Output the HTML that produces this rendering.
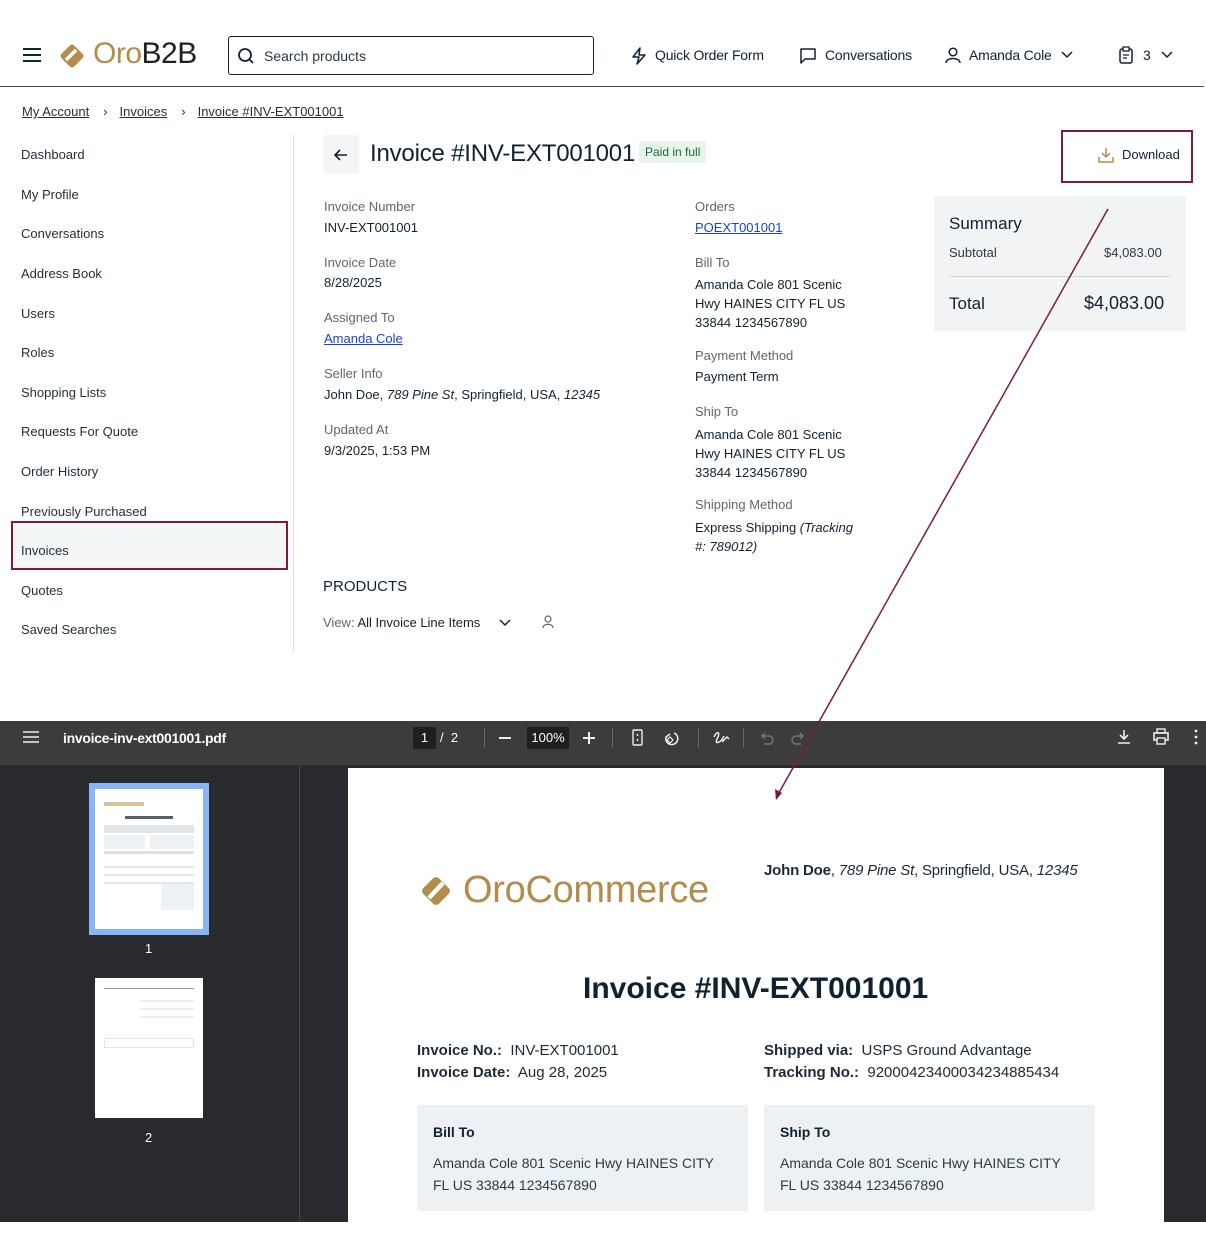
<!DOCTYPE html>
<html><head><meta charset="utf-8"><style>
*{box-sizing:border-box;margin:0;padding:0}
body{width:1206px;height:1247px;background:#fff;font-family:"Liberation Sans",sans-serif;color:#0f2230;position:relative;overflow:hidden;font-size:13px}
.a{position:absolute;white-space:nowrap}
.lbl{color:#5d6770;font-size:13px}
.val{font-size:13px;color:#0f2230}
a,.lnk{color:#1b3ee0;text-decoration:underline}
.nav{position:absolute;left:21px;font-size:13px;color:#1f2d38}
</style></head><body>
<!-- header -->
<svg class="a" style="left:22px;top:47px" width="20" height="16"><path d="M1 2h18M1 8h18M1 14h18" stroke="#0f2230" stroke-width="2"/></svg>
<svg class="a" style="left:56px;top:40px" width="32" height="32"><rect x="7" y="7" width="18" height="18" rx="3" transform="rotate(45 16 16)" fill="#b58b4c"/><path d="M10 20 L20 10" stroke="#fff" stroke-width="3.5"/></svg>
<div class="a" style="left:93px;top:37px;font-size:30px;color:#b58b4c;letter-spacing:-0.5px">Oro<span style="color:#1f2022">B2B</span></div>
<div class="a" style="left:228px;top:36px;width:366px;height:39px;border:1px solid #0f2230;border-radius:3px"></div>
<svg class="a" style="left:237px;top:47px" width="18" height="18"><circle cx="8" cy="8" r="6" fill="none" stroke="#0f2230" stroke-width="1.8"/><path d="M12.5 12.5 L16 16" stroke="#0f2230" stroke-width="1.8"/></svg>
<div class="a" style="left:264px;top:48px;font-size:14px;color:#2a3a46">Search products</div>
<svg class="a" style="left:630px;top:47px" width="18" height="18"><path d="M10 1 L3 10 H9 L7 17 L15 8 H9 Z" fill="none" stroke="#0f2230" stroke-width="1.5" stroke-linejoin="round"/></svg>
<div class="a" style="left:655px;top:47px;font-size:14px;letter-spacing:-0.2px">Quick Order Form</div>
<svg class="a" style="left:799px;top:47px" width="18" height="18"><path d="M2 2 H16 V12 H6 L2 16 Z" fill="none" stroke="#0f2230" stroke-width="1.5" stroke-linejoin="round"/></svg>
<div class="a" style="left:825px;top:47px;font-size:14px;letter-spacing:-0.2px">Conversations</div>
<svg class="a" style="left:944px;top:46px" width="18" height="18"><circle cx="9" cy="6" r="3.8" fill="none" stroke="#0f2230" stroke-width="1.5"/><path d="M2 17 C2 11 16 11 16 17" fill="none" stroke="#0f2230" stroke-width="1.5"/></svg>
<div class="a" style="left:969px;top:47px;font-size:14px;letter-spacing:-0.2px">Amanda Cole</div>
<svg class="a" style="left:1061px;top:51px" width="12" height="8"><path d="M1 1 L6 6 L11 1" fill="none" stroke="#0f2230" stroke-width="1.5"/></svg>
<svg class="a" style="left:1118px;top:46px" width="16" height="18"><rect x="2" y="3" width="12" height="14" rx="2" fill="none" stroke="#0f2230" stroke-width="1.5"/><rect x="5" y="1" width="6" height="4" fill="#fff" stroke="#0f2230" stroke-width="1.3"/><path d="M5 9h6M5 12h4" stroke="#0f2230" stroke-width="1.3"/></svg>
<div class="a" style="left:1143px;top:47px;font-size:14px">3</div>
<svg class="a" style="left:1161px;top:51px" width="12" height="8"><path d="M1 1 L6 6 L11 1" fill="none" stroke="#0f2230" stroke-width="1.5"/></svg>
<div class="a" style="left:0;top:86px;width:1204px;height:1px;background:#4a4f55"></div>
<!-- breadcrumb -->
<div class="a" style="left:22px;top:104px;font-size:13px;color:#1f2d38"><span style="text-decoration:underline">My Account</span><span style="margin:0 12px 0 14px">›</span><span style="text-decoration:underline">Invoices</span><span style="margin:0 12px 0 14px">›</span><span style="text-decoration:underline">Invoice #INV-EXT001001</span></div>
<!-- sidebar -->
<div class="nav" style="top:147px">Dashboard</div>
<div class="nav" style="top:187px">My Profile</div>
<div class="nav" style="top:226px">Conversations</div>
<div class="nav" style="top:266px">Address Book</div>
<div class="nav" style="top:306px">Users</div>
<div class="nav" style="top:345px">Roles</div>
<div class="nav" style="top:385px">Shopping Lists</div>
<div class="nav" style="top:424px">Requests For Quote</div>
<div class="nav" style="top:464px">Order History</div>
<div class="nav" style="top:504px">Previously Purchased</div>
<div class="a" style="left:11px;top:521px;width:277px;height:49px;border:2px solid #7b1c3f;background:#f3f5f7"></div>
<div class="nav" style="top:543px">Invoices</div>
<div class="nav" style="top:583px">Quotes</div>
<div class="nav" style="top:622px">Saved Searches</div>
<div class="a" style="left:293px;top:135px;width:1px;height:516px;background:#dfe2e5"></div>
<!-- title -->
<div class="a" style="left:323px;top:135px;width:36px;height:39px;background:#f3f5f7;border-radius:3px"></div>
<svg class="a" style="left:333px;top:148px" width="16" height="14"><path d="M14 7 H2 M7 2 L2 7 L7 12" fill="none" stroke="#0f2230" stroke-width="1.6"/></svg>
<div class="a" style="left:370px;top:140px;font-size:24px;color:#0f2230;letter-spacing:-0.2px">Invoice #INV-EXT001001</div>
<div class="a" style="left:639px;top:141px;padding:4px 6px;background:#e6f4ea;color:#1d6b30;font-size:12px;border-radius:3px">Paid in full</div>
<div class="a" style="left:1061px;top:130px;width:132px;height:53px;border:2px solid #7b1c3f"></div>
<svg class="a" style="left:1097px;top:146px" width="18" height="18"><path d="M9 2 V11 M5 7 L9 11 L13 7 M2 11 V16 H16 V11" fill="none" stroke="#b58b4c" stroke-width="1.5"/></svg>
<div class="a" style="left:1122px;top:147px;font-size:13px">Download</div>
<!-- details col1 -->
<div class="a lbl" style="left:324px;top:199px">Invoice Number</div><div class="a val" style="left:324px;top:220px">INV-EXT001001</div>
<div class="a lbl" style="left:324px;top:255px">Invoice Date</div><div class="a val" style="left:324px;top:275px">8/28/2025</div>
<div class="a lbl" style="left:324px;top:310px">Assigned To</div><div class="a lnk" style="left:324px;top:331px">Amanda Cole</div>
<div class="a lbl" style="left:324px;top:366px">Seller Info</div><div class="a val" style="left:324px;top:387px">John Doe, <i>789 Pine St</i>, Springfield, USA, <i>12345</i></div>
<div class="a lbl" style="left:324px;top:422px">Updated At</div><div class="a val" style="left:324px;top:443px">9/3/2025, 1:53 PM</div>
<!-- col2 -->
<div class="a lbl" style="left:695px;top:199px">Orders</div><div class="a lnk" style="left:695px;top:220px">POEXT001001</div>
<div class="a lbl" style="left:695px;top:255px">Bill To</div><div class="a val" style="left:695px;top:275px;line-height:19px">Amanda Cole 801 Scenic<br>Hwy HAINES CITY FL US<br>33844 1234567890</div>
<div class="a lbl" style="left:695px;top:348px">Payment Method</div><div class="a val" style="left:695px;top:369px">Payment Term</div>
<div class="a lbl" style="left:695px;top:404px">Ship To</div><div class="a val" style="left:695px;top:425px;line-height:19px">Amanda Cole 801 Scenic<br>Hwy HAINES CITY FL US<br>33844 1234567890</div>
<div class="a lbl" style="left:695px;top:497px">Shipping Method</div><div class="a val" style="left:695px;top:518px;line-height:19px">Express Shipping <i>(Tracking<br>#: 789012)</i></div>
<!-- summary -->
<div class="a" style="left:934px;top:196px;width:252px;height:135px;background:#f1f3f5"></div>
<div class="a" style="left:949px;top:214px;font-size:17px">Summary</div>
<div class="a" style="left:949px;top:245px;font-size:13px;color:#2a3a46">Subtotal</div>
<div class="a" style="left:1104px;top:245px;font-size:13px;color:#2a3a46">$4,083.00</div>
<div class="a" style="left:949px;top:276px;width:222px;height:1px;background:#cfd4d9"></div>
<div class="a" style="left:949px;top:294px;font-size:17px">Total</div>
<div class="a" style="left:1084px;top:293px;font-size:18px">$4,083.00</div>
<!-- products -->
<div class="a" style="left:323px;top:578px;font-size:15px">PRODUCTS</div>
<div class="a" style="left:323px;top:615px;font-size:13px;color:#5d6770">View: <span style="color:#0f2230">All Invoice Line Items</span></div>
<svg class="a" style="left:499px;top:619px" width="12" height="8"><path d="M1 1 L6 6 L11 1" fill="none" stroke="#0f2230" stroke-width="1.5"/></svg>
<svg class="a" style="left:542px;top:615px" width="12" height="14"><circle cx="6" cy="4" r="3" fill="none" stroke="#5d6770" stroke-width="1.2"/><path d="M1 13 C1 8 11 8 11 13" fill="none" stroke="#5d6770" stroke-width="1.2"/></svg>
<!-- PDF viewer -->
<div class="a" style="left:0;top:721px;width:1206px;height:501px;background:#282a2d"></div>
<div class="a" style="left:0;top:721px;width:1206px;height:44px;background:#3c3c3c"></div>
<div class="a" style="left:299px;top:765px;width:1px;height:457px;background:#4a4a4a"></div>
<svg class="a" style="left:23px;top:731px" width="16" height="12"><path d="M0 1h16M0 6h16M0 11h16" stroke="#eee" stroke-width="1.6"/></svg>
<div class="a" style="left:63px;top:730px;font-size:14px;color:#fff;font-weight:bold;letter-spacing:-0.3px">invoice-inv-ext001001.pdf</div>
<div class="a" style="left:413px;top:727px;width:23px;height:22px;background:#1f1f1f;color:#fff;font-size:13px;text-align:center;line-height:22px">1</div>
<div class="a" style="left:440px;top:730px;color:#fff;font-size:13px">/&nbsp; 2</div>
<div class="a" style="left:484px;top:728px;width:1px;height:20px;background:#666"></div>
<div class="a" style="left:499px;top:737px;width:12px;height:2px;background:#eee"></div>
<div class="a" style="left:527px;top:727px;width:42px;height:22px;background:#1f1f1f;color:#fff;font-size:13px;text-align:center;line-height:22px">100%</div>
<div class="a" style="left:583px;top:737px;width:12px;height:2px;background:#eee"></div><div class="a" style="left:588px;top:732px;width:2px;height:12px;background:#eee"></div>
<div class="a" style="left:612px;top:728px;width:1px;height:20px;background:#666"></div>
<svg class="a" style="left:630px;top:729px" width="80" height="18"><rect x="3" y="1" width="9" height="15" rx="1" fill="none" stroke="#eee" stroke-width="1.4"/><path d="M7.5 5v2M7.5 10v2" stroke="#eee" stroke-width="1.4"/><path d="M44 4 A6 6 0 1 1 36 8 L40 5" fill="none" stroke="#eee" stroke-width="1.5"/><path d="M40 8 l3 3 -3 3 -3 -3z" fill="none" stroke="#eee" stroke-width="1.2"/></svg>
<div class="a" style="left:698px;top:728px;width:1px;height:20px;background:#666"></div>
<svg class="a" style="left:712px;top:729px" width="18" height="18"><path d="M2 8 C5 1 9 3 5 10 C2 16 9 14 12 7 M10 13 L15 8 L17 10" fill="none" stroke="#eee" stroke-width="1.5"/></svg>
<div class="a" style="left:743px;top:728px;width:1px;height:20px;background:#666"></div>
<svg class="a" style="left:758px;top:729px" width="50" height="18"><path d="M4 7 H11 A4 4 0 0 1 11 15 H6 M7 4 L4 7 L7 10" fill="none" stroke="#777" stroke-width="1.4"/><path d="M45 7 H38 A4 4 0 0 0 38 15 H43 M42 4 L45 7 L42 10" fill="none" stroke="#777" stroke-width="1.4"/></svg>
<svg class="a" style="left:1115px;top:728px" width="90" height="18"><path d="M9 2 V11 M5 7 L9 11 L13 7 M3 15 H15" fill="none" stroke="#eee" stroke-width="1.6"/><rect x="39" y="5" width="14" height="7" fill="none" stroke="#eee" stroke-width="1.6"/><rect x="42" y="1" width="8" height="4" fill="none" stroke="#eee" stroke-width="1.4"/><rect x="42" y="10" width="8" height="6" fill="#3c3c3c" stroke="#eee" stroke-width="1.4"/><circle cx="81" cy="3" r="1.4" fill="#eee"/><circle cx="81" cy="9" r="1.4" fill="#eee"/><circle cx="81" cy="15" r="1.4" fill="#eee"/></svg>
<!-- thumbnails -->
<div class="a" style="left:89px;top:783px;width:120px;height:152px;background:#8ab4f8"></div>
<div class="a" style="left:95px;top:789px;width:108px;height:140px;background:#fff"></div>
<div class="a" style="left:104px;top:802px;width:40px;height:4px;background:#d8c39f"></div>
<div class="a" style="left:125px;top:816px;width:48px;height:3px;background:#55606a"></div>
<div class="a" style="left:104px;top:825px;width:90px;height:8px;background:#e3e6e9"></div>
<div class="a" style="left:104px;top:835px;width:41px;height:14px;background:#eef1f4"></div>
<div class="a" style="left:150px;top:835px;width:44px;height:14px;background:#eef1f4"></div>
<div class="a" style="left:104px;top:851px;width:90px;height:3px;background:#dde1e5"></div>
<div class="a" style="left:104px;top:860px;width:90px;height:30px;background:repeating-linear-gradient(#fff 0 6px,#e4e7ea 6px 8px)"></div>
<div class="a" style="left:161px;top:884px;width:33px;height:26px;background:#eef1f4"></div>
<div class="a" style="left:145px;top:941px;color:#fff;font-size:13px">1</div>
<div class="a" style="left:95px;top:978px;width:108px;height:140px;background:#fff"></div>
<div class="a" style="left:104px;top:988px;width:90px;height:1px;background:#999"></div>
<div class="a" style="left:140px;top:994px;width:54px;height:30px;background:repeating-linear-gradient(#fff 0 6px,#eceef0 6px 8px)"></div>
<div class="a" style="left:104px;top:1038px;width:90px;height:10px;border:1px solid #e2e4e6"></div>
<div class="a" style="left:145px;top:1130px;color:#fff;font-size:13px">2</div>
<!-- page -->
<div class="a" style="left:348px;top:768px;width:816px;height:460px;background:#fff"></div>
<svg class="a" style="left:416px;top:870px" width="40" height="42"><rect x="9" y="10" width="22" height="22" rx="4" transform="rotate(45 20 21)" fill="#b58b4c"/><path d="M13 28 L27 13" stroke="#fff" stroke-width="4.5"/></svg>
<div class="a" style="left:463px;top:869px;font-size:38px;color:#b58b4c;letter-spacing:-0.3px">OroCommerce</div>
<div class="a" style="left:764px;top:862px;font-size:15px;color:#1b2a35;letter-spacing:-0.2px"><b>John Doe</b>, <i>789 Pine St</i>, Springfield, USA, <i>12345</i></div>
<div class="a" style="left:583px;top:972px;font-size:30px;font-weight:bold;color:#0f2230">Invoice #INV-EXT001001</div>
<div class="a" style="left:417px;top:1040px;font-size:15px;line-height:22px;color:#1b2a35"><b>Invoice No.:</b>&nbsp; INV-EXT001001<br><b>Invoice Date:</b>&nbsp; Aug 28, 2025</div>
<div class="a" style="left:764px;top:1040px;font-size:15px;line-height:22px;color:#1b2a35"><b>Shipped via:</b>&nbsp; USPS Ground Advantage<br><b>Tracking No.:</b>&nbsp; 92000423400034234885434</div>
<div class="a" style="left:417px;top:1105px;width:331px;height:106px;background:#eef1f4"></div>
<div class="a" style="left:764px;top:1105px;width:331px;height:106px;background:#eef1f4"></div>
<div class="a" style="left:433px;top:1124px;font-size:14px;font-weight:bold">Bill To</div>
<div class="a" style="left:433px;top:1152px;font-size:14px;line-height:22px;color:#2a3a46">Amanda Cole 801 Scenic Hwy HAINES CITY<br>FL US 33844 1234567890</div>
<div class="a" style="left:780px;top:1124px;font-size:14px;font-weight:bold">Ship To</div>
<div class="a" style="left:780px;top:1152px;font-size:14px;line-height:22px;color:#2a3a46">Amanda Cole 801 Scenic Hwy HAINES CITY<br>FL US 33844 1234567890</div>
<div class="a" style="left:0;top:1222px;width:1206px;height:25px;background:#fff"></div>
<!-- arrow -->
<svg class="a" style="left:0;top:0" width="1206" height="1247"><path d="M1108 209 L776 798" stroke="#7b1c3f" stroke-width="1.5"/><path d="M776 800 L775 789 L782 793 Z" fill="#7b1c3f"/></svg>
</body></html>
